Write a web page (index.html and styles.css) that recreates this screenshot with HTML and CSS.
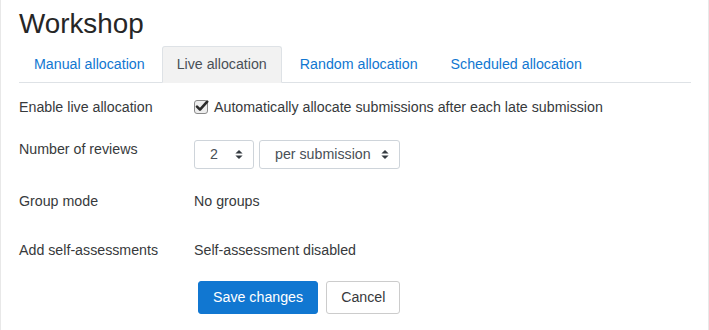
FILE: index.html
```html
<!DOCTYPE html>
<html lang="en">
<head>
<meta charset="utf-8">
<title>Workshop</title>
<link rel="stylesheet" href="styles.css">
</head>
<body>
<div class="page">
  <h2 class="title">Workshop</h2>
  <ul class="tabs">
    <li class="tab"><a href="#">Manual allocation</a></li>
    <li class="tab active"><a href="#">Live allocation</a></li>
    <li class="tab"><a href="#">Random allocation</a></li>
    <li class="tab"><a href="#">Scheduled allocation</a></li>
  </ul>
  <form class="form">
    <div class="row row-check">
      <div class="label">Enable live allocation</div>
      <div class="control">
        <label class="checkbox">
          <svg class="checkbox-icon" width="15" height="15" viewBox="0 0 15 15" aria-hidden="true">
            <rect x="0.5" y="1.5" width="13" height="13" rx="2.5" fill="#eeeeee" stroke="#8a8a8a"/>
            <path d="M3 7.6 L6 10.6 L13.2 2.6" fill="none" stroke="#2b2b2b" stroke-width="2.6" stroke-linecap="round" stroke-linejoin="round"/>
          </svg>
          <span>Automatically allocate submissions after each late submission</span>
        </label>
      </div>
    </div>
    <div class="row row-select">
      <div class="label">Number of reviews</div>
      <div class="control selects">
        <div class="select select-num"><span>2</span><svg class="caret" width="8" height="10" viewBox="0 0 4 5"><path d="M2 0L0 2h4zm0 5L0 3h4z" fill="#343a40"/></svg></div>
        <div class="select select-per"><span>per submission</span><svg class="caret" width="8" height="10" viewBox="0 0 4 5"><path d="M2 0L0 2h4zm0 5L0 3h4z" fill="#343a40"/></svg></div>
      </div>
    </div>
    <div class="row row-static">
      <div class="label">Group mode</div>
      <div class="control">No groups</div>
    </div>
    <div class="row row-last">
      <div class="label">Add self-assessments</div>
      <div class="control">Self-assessment disabled</div>
    </div>
    <div class="buttons">
      <button type="button" class="btn btn-primary">Save changes</button>
      <button type="button" class="btn btn-secondary">Cancel</button>
    </div>
  </form>
</div>
</body>
</html>
```
FILE: styles.css
```css
html, body {
  margin: 0;
  padding: 0;
  background: #ffffff;
}
body {
  font-family: "Liberation Sans", Arial, sans-serif;
  font-size: 14.22px;
  line-height: 1.5;
  color: #373a3c;
}
.page {
  height: 330px;
  box-sizing: border-box;
  border-left: 1px solid #e8e8e8;
  border-right: 1px solid #e8e8e8;
  padding: 0 17px 0 18px;
  overflow: hidden;
}
.title {
  margin: 7.4px 0 5.3px;
  font-size: 27.8px;
  font-weight: 400;
  line-height: 1.2;
  color: #262626;
}
.tabs {
  list-style: none;
  margin: 0;
  padding: 0;
  display: flex;
  border-bottom: 1px solid #dee2e6;
}
.tab {
  margin-right: 2px;
  margin-bottom: -1px;
}
.tab a {
  display: block;
  padding: 6.9px 14px 6.5px;
  border: 1px solid transparent;
  border-radius: 3px 3px 0 0;
  color: #1177d1;
  text-decoration: none;
}
.tab.active a {
  color: #495057;
  background: #f2f2f2;
  border-color: #dee2e6 #dee2e6 #f2f2f2;
}
.tab:nth-child(3) a {
  padding-left: 15px;
}
.tab:nth-child(4) a {
  padding-left: 15px;
}
.form {
  padding-top: 14.6px;
}
.row {
  display: flex;
  align-items: flex-start;
}
.label {
  width: 175px;
  flex: none;
}
.control {
  display: flex;
  align-items: center;
}
.row-check {
  height: 42px;
}
.row-select {
  height: 52px;
}
.row-static {
  height: 49px;
}
.row-last {
  height: 40.8px;
}
.checkbox {
  display: flex;
  align-items: center;
  gap: 5px;
}
.checkbox-icon {
  display: block;
  margin-top: -3px;
}
.selects {
  gap: 5px;
  padding-top: 0.4px;
}
.select {
  box-sizing: border-box;
  height: 29.5px;
  display: flex;
  align-items: center;
  justify-content: space-between;
  padding: 0 10px 0 15px;
  border: 1px solid #ced4da;
  border-radius: 3px;
  color: #495057;
  background: #ffffff;
}
.select span {
  padding-top: 1px;
}
.select-num {
  width: 60px;
}
.select-per {
  width: 141px;
  padding-left: 15px;
}
.caret {
  display: block;
  width: 8px;
  height: 9px;
}
.buttons {
  display: flex;
  gap: 8px;
  padding-left: 179px;
}
.btn {
  font: inherit;
  line-height: 1.5;
  height: 33.3px;
  padding: 0 14px;
  border-radius: 3px;
  border: 1px solid transparent;
  cursor: pointer;
}
.btn-primary {
  background: #1177d1;
  border-color: #1177d1;
  color: #ffffff;
}
.btn-secondary {
  background: #ffffff;
  border-color: #cccccc;
  color: #373a3c;
}
```
